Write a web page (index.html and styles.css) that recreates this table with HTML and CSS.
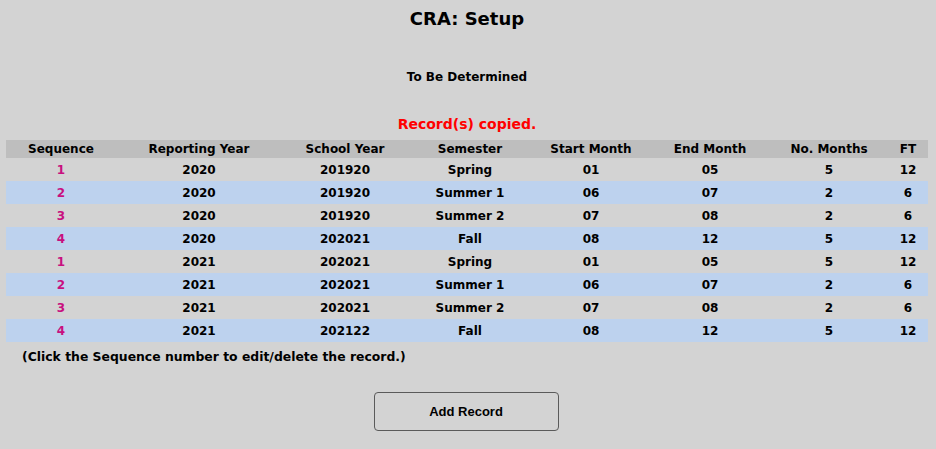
FILE: index.html
```html
<!DOCTYPE html>
<html>
<head>
<meta charset="utf-8">
<link rel="stylesheet" href="styles.css">
</head>
<body>
<div class="page">
  <h1 class="title">CRA: Setup</h1>
  <div class="subtitle">To Be Determined</div>
  <div class="message">Record(s) copied.</div>
  <div class="grid">
    <div class="row head">
      <div class="cell">Sequence</div><div class="cell">Reporting Year</div><div class="cell">School Year</div><div class="cell">Semester</div><div class="cell">Start Month</div><div class="cell">End Month</div><div class="cell">No. Months</div><div class="cell">FT</div>
    </div>
    <div class="row">
      <div class="cell seq">1</div><div class="cell">2020</div><div class="cell">201920</div><div class="cell">Spring</div><div class="cell">01</div><div class="cell">05</div><div class="cell">5</div><div class="cell">12</div>
    </div>
    <div class="row alt">
      <div class="cell seq">2</div><div class="cell">2020</div><div class="cell">201920</div><div class="cell">Summer 1</div><div class="cell">06</div><div class="cell">07</div><div class="cell">2</div><div class="cell">6</div>
    </div>
    <div class="row">
      <div class="cell seq">3</div><div class="cell">2020</div><div class="cell">201920</div><div class="cell">Summer 2</div><div class="cell">07</div><div class="cell">08</div><div class="cell">2</div><div class="cell">6</div>
    </div>
    <div class="row alt">
      <div class="cell seq">4</div><div class="cell">2020</div><div class="cell">202021</div><div class="cell">Fall</div><div class="cell">08</div><div class="cell">12</div><div class="cell">5</div><div class="cell">12</div>
    </div>
    <div class="row">
      <div class="cell seq">1</div><div class="cell">2021</div><div class="cell">202021</div><div class="cell">Spring</div><div class="cell">01</div><div class="cell">05</div><div class="cell">5</div><div class="cell">12</div>
    </div>
    <div class="row alt">
      <div class="cell seq">2</div><div class="cell">2021</div><div class="cell">202021</div><div class="cell">Summer 1</div><div class="cell">06</div><div class="cell">07</div><div class="cell">2</div><div class="cell">6</div>
    </div>
    <div class="row">
      <div class="cell seq">3</div><div class="cell">2021</div><div class="cell">202021</div><div class="cell">Summer 2</div><div class="cell">07</div><div class="cell">08</div><div class="cell">2</div><div class="cell">6</div>
    </div>
    <div class="row alt">
      <div class="cell seq">4</div><div class="cell">2021</div><div class="cell">202122</div><div class="cell">Fall</div><div class="cell">08</div><div class="cell">12</div><div class="cell">5</div><div class="cell">12</div>
    </div>
  </div>
  <div class="note">(Click the Sequence number to edit/delete the record.)</div>
  <div class="actions">
    <button class="btn" type="button">Add Record</button>
  </div>
</div>
</body>
</html>
```

FILE: styles.css
```css
html, body {
  margin: 0;
  padding: 0;
  background: #d3d3d3;
}
body {
  font-family: "DejaVu Sans", sans-serif;
  font-weight: bold;
  color: #000;
  width: 936px;
  height: 449px;
  overflow: hidden;
}
.page {
  display: flex;
  flex-direction: column;
  padding: 6px 8px 0 6px;
}
.title {
  margin: 0;
  font-size: 18px;
  line-height: 26px;
  text-align: center;
  font-weight: bold;
}
.subtitle {
  margin-top: 37px;
  font-size: 12px;
  line-height: 16px;
  text-align: center;
}
.message {
  margin-top: 29px;
  font-size: 14px;
  line-height: 20px;
  color: #ff0000;
  text-align: center;
}
.grid {
  margin-top: 6px;
  display: flex;
  flex-direction: column;
  width: 922px;
}
.row {
  display: grid;
  grid-template-columns: 110px 166px 126px 124px 118px 120px 118px 40px;
  height: 23px;
  align-items: center;
  font-size: 12px;
}
.row.head {
  height: 18px;
  background: #bebebe;
}
.row.alt {
  background: #bdd2ee;
}
.cell {
  display: flex;
  justify-content: center;
  white-space: nowrap;
}
.seq {
  color: #c8107f;
}
.note {
  margin-top: 7px;
  padding-left: 16px;
  font-size: 12.4px;
  line-height: 16px;
}
.actions {
  display: flex;
  justify-content: center;
  margin-top: 27px;
  padding-right: 2px;
}
.btn {
  width: 185px;
  height: 39px;
  background: #d3d3d3;
  border: 1px solid #5a5a5a;
  border-radius: 4px;
  font-family: "Liberation Sans", Arial, sans-serif;
  font-weight: bold;
  font-size: 13px;
  color: #000;
  padding: 0;
}
```
